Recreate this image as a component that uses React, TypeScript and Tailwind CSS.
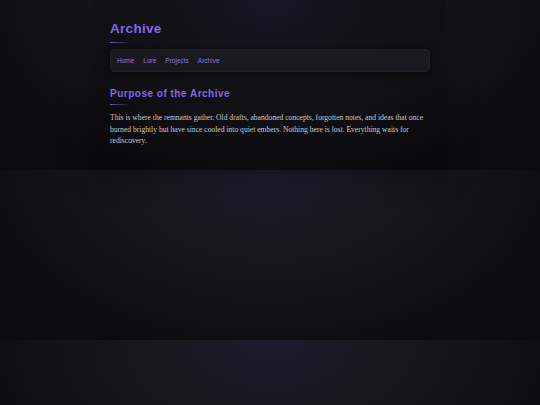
export default function App() {
    const links = ["Home", "Lore", "Projects", "Archive"];

    return <div className="min-h-screen bg-[#0c0c0f] bg-[radial-gradient(ellipse_at_top,#1d1c2c_0%,#17171e_30%,#131318_55%,#0c0c0f_80%)] bg-[length:100%_170px] bg-repeat">
        <div className="w-[350px] h-[170px] mx-auto bg-black/20 shadow-[0_0_30px_rgba(0,0,0,0.35)] px-[15px] pt-[20px]" style={{ fontFamily: '"Liberation Sans", Arial, sans-serif' }}>
            <h1 className="text-[13.5px] leading-[18px] font-bold tracking-[0.3px] text-[#8466ea]">Archive</h1>
            <div className="mt-[4px] w-[22px] h-px bg-gradient-to-r from-[#6a56b8] to-transparent"></div>

            <nav className="mt-[6px] h-[23px] rounded-[4px] bg-[#1a1920] border border-[#201f27] shadow-[0_2px_8px_rgba(0,0,0,0.4)] flex items-center gap-[9px] px-[6px]">
                {links.map((l) => (
                    <a key={l} className="text-[6.5px] text-[#8a78e2]">{l}</a>
                ))}
            </nav>

            <h2 className="mt-[15px] text-[10px] leading-[13px] font-bold tracking-[0.5px] text-[#8466ea]">Purpose of the Archive</h2>
            <div className="mt-[4px] w-[20px] h-px bg-gradient-to-r from-[#6a56b8] to-transparent"></div>

            <p className="mt-[7px] text-[7.6px] leading-[11.5px] text-[#c9c8cf]" style={{ fontFamily: '"Liberation Serif", Georgia, serif' }}>
                This is where the remnants gather. Old drafts, abandoned concepts, forgotten notes, and ideas that once burned brightly but have since cooled into quiet embers. Nothing here is lost. Everything waits for rediscovery.
            </p>
        </div>
    </div>
}
